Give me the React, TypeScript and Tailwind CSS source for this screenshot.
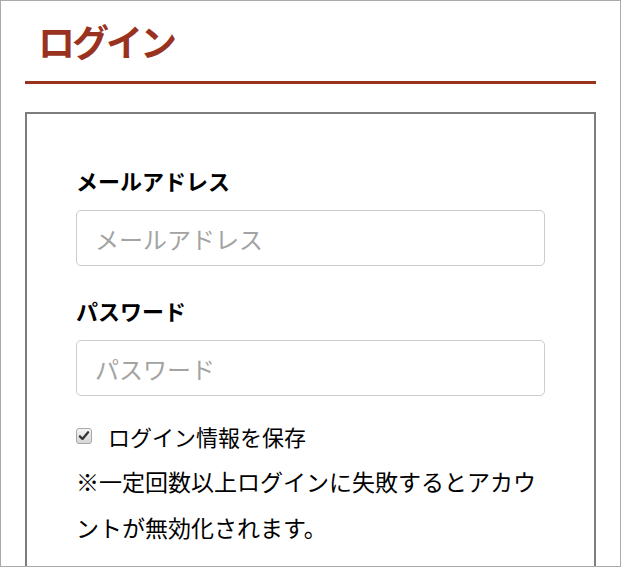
const font = { fontFamily: '"Noto Sans CJK JP", "Noto Sans", sans-serif' };

function Field({ label, placeholder, type }: { label: string; placeholder: string; type: string }) {
  return (
    <div>
      <label className="block text-[22px] font-bold leading-[30px] text-black">{label}</label>
      <input
        type={type}
        placeholder={placeholder}
        className="mt-[15px] block h-[56px] w-full rounded-[5px] border border-[#cccccc] bg-white pl-[18px] text-[24px] text-black outline-none placeholder:text-[#a3a3a3]"
      />
    </div>
  );
}

export default function App() {
  return (
    <div
      className="h-[567px] w-[621px] overflow-hidden border border-[#aaaaaa] bg-white px-[24px]"
      style={font}
    >
      <h1 className="mt-[20px] border-b-[3px] border-[#99331f] pb-[20px] pl-[13px] text-[37px] font-bold leading-[40px] tracking-[-3px] text-[#99331f]">
        ログイン
      </h1>

      <form className="mt-[28px] border-2 border-[#7d7d7d] px-[49px] pt-[51px] pb-[40px]">
        <Field label="メールアドレス" placeholder="メールアドレス" type="email" />
        <div className="mt-[29px]">
          <Field label="パスワード" placeholder="パスワード" type="password" />
        </div>

        <label className="mt-[24px] flex items-center gap-[16px] text-[22px] leading-[32px] text-black">
          <span className="flex h-[16px] w-[16px] shrink-0 items-center justify-center rounded-[3px] border border-[#a8a8a8] bg-gradient-to-b from-[#f4f4f4] to-[#d6d6d6]">
            <svg viewBox="0 0 16 16" className="h-[12px] w-[12px]">
              <path d="M2.5 8.5 L6 12 L13.5 3" fill="none" stroke="#333" strokeWidth="3" strokeLinecap="round" strokeLinejoin="round" />
            </svg>
          </span>
          ログイン情報を保存
        </label>

        <p className="mt-[6px] text-[23px] leading-[46px] text-black">
          ※一定回数以上ログインに失敗するとアカウントが無効化されます。
        </p>
      </form>
    </div>
  );
}
